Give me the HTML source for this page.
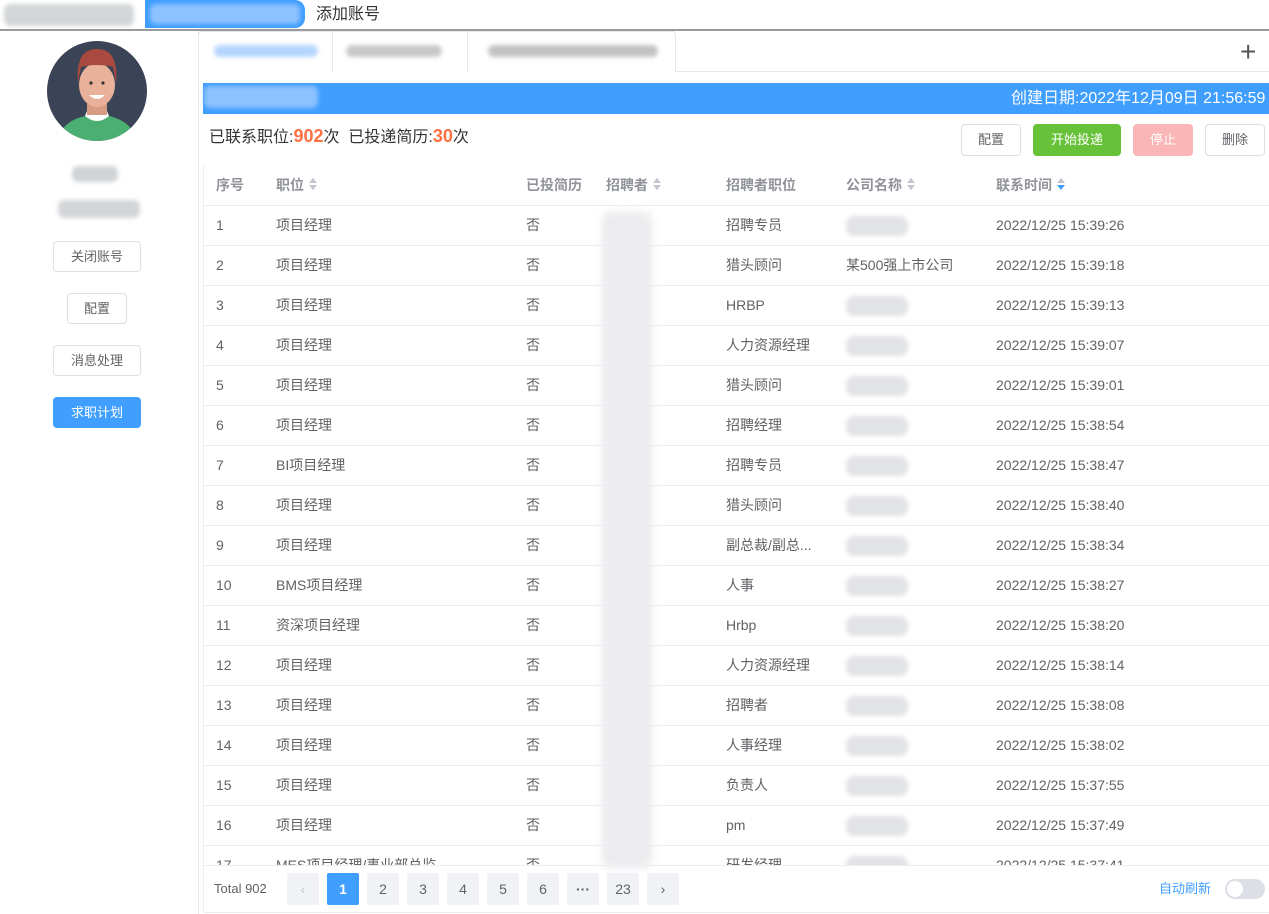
<!DOCTYPE html>
<html><head><meta charset="utf-8"><style>
*{box-sizing:border-box;margin:0;padding:0}
body{width:1269px;height:914px;overflow:hidden;background:#fff;font-family:"Liberation Sans","Noto Sans CJK SC",sans-serif;color:#606266;font-size:14px;position:relative}
.abs{position:absolute}
.blur{position:absolute;filter:blur(2px);border-radius:6px}
.btn{position:absolute;border:1px solid #dcdfe6;border-radius:4px;background:#fff;font-size:13px;color:#606266;text-align:center}
.th{position:absolute;top:165px;height:40px;line-height:40px;font-size:14px;font-weight:bold;color:#909399}
.row{position:absolute;left:204px;width:1065px;height:40px;border-bottom:1px solid #ebeef5}
.row span{position:absolute;top:0;height:39px;line-height:39px;font-size:14px;color:#606266;white-space:nowrap}
.sort{display:inline-block;vertical-align:middle;margin-left:5px;width:8px;height:12px;position:relative;top:-2px}
.sort:before{content:"";position:absolute;left:0;top:0;border:4px solid transparent;border-bottom:5px solid #c0c4cc;border-top:0}
.sort:after{content:"";position:absolute;left:0;top:7px;border:4px solid transparent;border-top:5px solid #c0c4cc;border-bottom:0}
.sort.on:after{border-top-color:#409eff}
.pg{position:absolute;top:873px;width:32px;height:32px;background:#f0f2f5;border-radius:2px;text-align:center;line-height:32px;font-size:14px;color:#606266}
</style></head><body>
<div class="blur" style="left:4px;top:4px;width:130px;height:22px;background:#d3d6d9"></div>
<div class="abs" style="left:145px;top:0;width:160px;height:28px;background:#409eff;border-radius:0 10px 10px 0"></div>
<div class="blur" style="left:150px;top:4px;width:150px;height:20px;background:#8cc2ff"></div>
<div class="abs" style="left:316px;top:0;height:30px;line-height:30px;font-size:16px;color:#333">添加账号</div>
<div class="abs" style="left:0;top:29px;width:1269px;height:2px;background:#9a9a9a"></div>
<div class="abs" style="left:198px;top:31px;width:1px;height:883px;background:#e4e7ed"></div>
<svg class="abs" style="left:47px;top:41px" width="100" height="100" viewBox="0 0 100 100">
<defs><clipPath id="c"><circle cx="50" cy="50" r="50"/></clipPath></defs>
<g clip-path="url(#c)"><rect width="100" height="100" fill="#3b4356"/>
<path d="M10 100 Q15 80 38 75 L62 75 Q85 80 90 100Z" fill="#4caf72"/>
<path d="M38 75 Q50 85 62 75 L60 70 L40 70Z" fill="#fff"/>
<rect x="40" y="56" width="20" height="18" fill="#d79a83"/>
<ellipse cx="50" cy="44" rx="18" ry="22" fill="#e9b09a"/>
<path d="M31 42 Q28 8 50 8 Q72 8 69 42 L66 26 Q50 22 34 26Z" fill="#a84a3f"/>
<circle cx="44" cy="42" r="1.6" fill="#333"/><circle cx="56" cy="42" r="1.6" fill="#333"/>
<path d="M42 54 Q50 62 58 54Z" fill="#fff"/></g></svg>
<div class="blur" style="left:72px;top:166px;width:46px;height:16px;background:#d0d3d6"></div>
<div class="blur" style="left:58px;top:200px;width:82px;height:18px;background:#d3d5d8"></div>
<div class="btn" style="left:53px;top:241px;width:88px;height:31px;line-height:29px">关闭账号</div>
<div class="btn" style="left:67px;top:293px;width:60px;height:31px;line-height:29px">配置</div>
<div class="btn" style="left:53px;top:345px;width:88px;height:31px;line-height:29px">消息处理</div>
<div class="btn" style="left:53px;top:397px;width:88px;height:31px;line-height:29px;background:#409eff;border-color:#409eff;color:#fff">求职计划</div>
<div class="abs" style="left:198px;top:71px;width:1071px;height:1px;background:#e4e7ed"></div>
<div class="abs" style="left:198px;top:31px;width:478px;height:41px;border:1px solid #e4e7ed;border-bottom:none;border-radius:4px 4px 0 0;background:#fff"></div>
<div class="abs" style="left:332px;top:31px;width:1px;height:41px;background:#e4e7ed"></div>
<div class="abs" style="left:467px;top:31px;width:1px;height:41px;background:#e4e7ed"></div>
<div class="blur" style="left:214px;top:45px;width:104px;height:12px;background:#b5d5ff"></div>
<div class="blur" style="left:346px;top:45px;width:96px;height:12px;background:#c8c8c8"></div>
<div class="blur" style="left:488px;top:45px;width:170px;height:12px;background:#c2c2c4"></div>
<div class="abs" style="left:1240px;top:42px;font-size:28px;line-height:20px;color:#555;font-weight:300">+</div>
<div class="abs" style="left:203px;top:83px;width:1066px;height:31px;background:#409eff"></div>
<div class="blur" style="left:204px;top:86px;width:114px;height:22px;background:#8cc2ff"></div>
<div class="abs" style="left:1011px;top:83px;height:31px;line-height:31px;font-size:16px;color:#fff">创建日期:2022年12月09日 21:56:59</div>
<div class="abs" style="left:209px;top:122px;height:28px;line-height:28px;font-size:16px;color:#333">已联系职位:<b style="color:#ff7043;font-size:18px">902</b>次&nbsp; 已投递简历:<b style="color:#ff7043;font-size:18px">30</b>次</div>
<div class="btn" style="left:961px;top:124px;width:60px;height:32px;line-height:30px">配置</div>
<div class="btn" style="left:1033px;top:124px;width:88px;height:32px;line-height:30px;background:#67c23a;border-color:#67c23a;color:#fff">开始投递</div>
<div class="btn" style="left:1133px;top:124px;width:60px;height:32px;line-height:30px;background:#fab6b6;border-color:#fab6b6;color:#fff">停止</div>
<div class="btn" style="left:1205px;top:124px;width:60px;height:32px;line-height:30px">删除</div>
<div class="abs" style="left:203px;top:165px;width:1066px;height:748px;border:1px solid #ebeef5;border-right:none;border-top:none"></div>
<div class="abs" style="left:204px;top:205px;width:1065px;height:1px;background:#ebeef5"></div>
<div class="th" style="left:216px">序号</div>
<div class="th" style="left:276px">职位<i class="sort"></i></div>
<div class="th" style="left:526px">已投简历</div>
<div class="th" style="left:606px">招聘者<i class="sort"></i></div>
<div class="th" style="left:726px">招聘者职位</div>
<div class="th" style="left:846px">公司名称<i class="sort"></i></div>
<div class="th" style="left:996px">联系时间<i class="sort on"></i></div>
<div class="abs" style="left:204px;top:206px;width:1065px;height:660px;overflow:hidden">
<div id="rows"></div>
</div>
<div class="blur" style="left:602px;top:212px;width:50px;height:656px;background:#ececee;filter:blur(4px)"></div>
<div class="abs" style="left:204px;top:865px;width:1065px;height:1px;background:#ebeef5"></div>
<div class="abs" style="left:214px;top:873px;height:32px;line-height:32px;font-size:13px">Total 902</div>
<div class="pg" style="left:287px;color:#c0c4cc">‹</div>
<div class="pg" style="left:327px;background:#409eff;color:#fff;font-weight:bold">1</div>
<div class="pg" style="left:367px">2</div><div class="pg" style="left:407px">3</div>
<div class="pg" style="left:447px">4</div><div class="pg" style="left:487px">5</div>
<div class="pg" style="left:527px">6</div><div class="pg" style="left:567px;font-weight:bold">···</div>
<div class="pg" style="left:607px">23</div><div class="pg" style="left:647px">›</div>
<div class="abs" style="left:1159px;top:873px;height:32px;line-height:32px;font-size:13px;color:#409eff">自动刷新</div>
<div class="abs" style="left:1225px;top:879px;width:40px;height:20px;border-radius:10px;background:#dcdfe6"></div>
<div class="abs" style="left:1227px;top:881px;width:16px;height:16px;border-radius:8px;background:#fff"></div>
<script>
var d=[["1","项目经理","招聘专员","","2022/12/25 15:39:26"],["2","项目经理","猎头顾问","某500强上市公司","2022/12/25 15:39:18"],["3","项目经理","HRBP","","2022/12/25 15:39:13"],["4","项目经理","人力资源经理","","2022/12/25 15:39:07"],["5","项目经理","猎头顾问","","2022/12/25 15:39:01"],["6","项目经理","招聘经理","","2022/12/25 15:38:54"],["7","BI项目经理","招聘专员","","2022/12/25 15:38:47"],["8","项目经理","猎头顾问","","2022/12/25 15:38:40"],["9","项目经理","副总裁/副总...","","2022/12/25 15:38:34"],["10","BMS项目经理","人事","","2022/12/25 15:38:27"],["11","资深项目经理","Hrbp","","2022/12/25 15:38:20"],["12","项目经理","人力资源经理","","2022/12/25 15:38:14"],["13","项目经理","招聘者","","2022/12/25 15:38:08"],["14","项目经理","人事经理","","2022/12/25 15:38:02"],["15","项目经理","负责人","","2022/12/25 15:37:55"],["16","项目经理","pm","","2022/12/25 15:37:49"],["17","MES项目经理/事业部总监","研发经理","","2022/12/25 15:37:41"]];
var h="";d.forEach(function(r,i){h+='<div class="row" style="left:0;top:'+(i*40)+'px"><span style="left:12px">'+r[0]+'</span><span style="left:72px">'+r[1]+'</span><span style="left:322px">否</span><span style="left:522px">'+r[2]+'</span>'+(r[3]?'<span style="left:642px">'+r[3]+'</span>':'<i style="position:absolute;left:642px;top:10px;width:62px;height:20px;background:#e2e3e6;filter:blur(2px);border-radius:8px"></i>')+'<span style="left:792px">'+r[4]+'</span></div>';});
document.getElementById("rows").innerHTML=h;
</script>
</body></html>
